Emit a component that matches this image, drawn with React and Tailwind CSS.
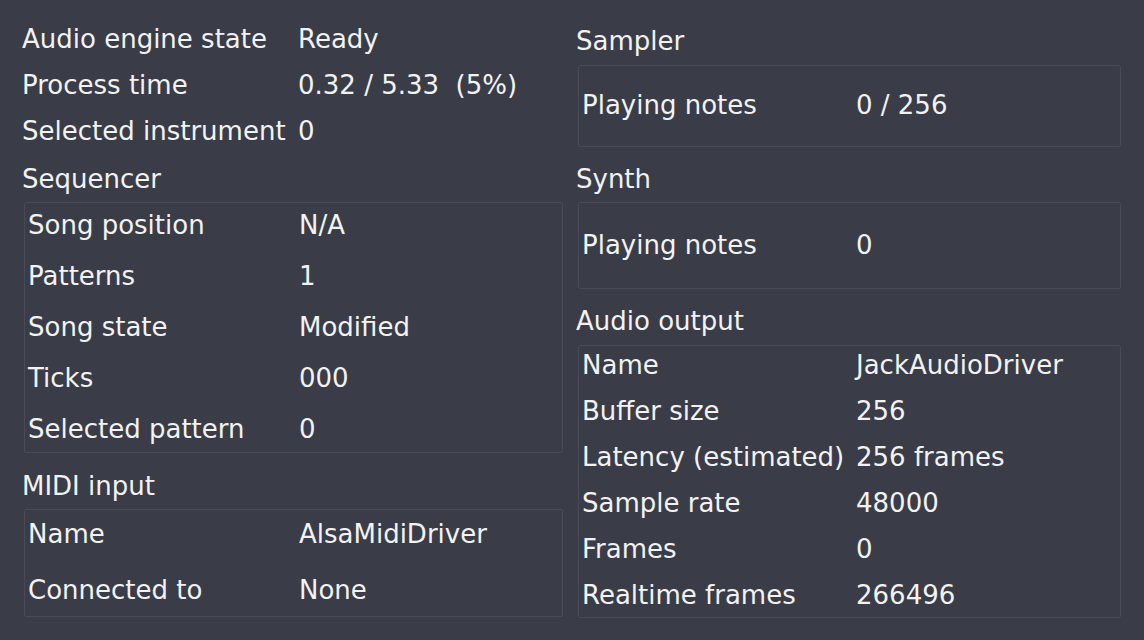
import React from "react";

const Row = ({ label, value, labelW }) => (
  <div className="flex h-[30px] leading-[30px] whitespace-pre">
    <div style={{ width: labelW }} className="shrink-0">{label}</div>
    <div>{value}</div>
  </div>
);

export default function App() {
  return (
    <div
      className="w-[1144px] h-[640px] bg-[#3a3d48] text-[#f2f2f2] text-[26px] overflow-hidden flex pl-[22px] pr-[23px]"
      style={{ fontFamily: '"DejaVu Sans", sans-serif' }}
    >
      {/* Left column */}
      <div className="w-[541px] shrink-0 flex flex-col">
        <div className="pt-[24px] flex flex-col gap-[16px]">
          <Row label="Audio engine state" value="Ready" labelW={276} />
          <Row label="Process time" value="0.32 / 5.33  (5%)" labelW={276} />
          <Row label="Selected instrument" value="0" labelW={276} />
        </div>
        <div className="mt-[18px] h-[30px] leading-[30px]">Sequencer</div>
        <div className="mt-[8px] ml-[2px] border border-[#484b57] rounded-[2px] pl-[3px] pt-[7px] pb-[8px] flex flex-col gap-[21px]">
          <Row label="Song position" value="N/A" labelW={271} />
          <Row label="Patterns" value="1" labelW={271} />
          <Row label="Song state" value="Modified" labelW={271} />
          <Row label="Ticks" value="000" labelW={271} />
          <Row label="Selected pattern" value="0" labelW={271} />
        </div>
        <div className="mt-[18px] h-[30px] leading-[30px]">MIDI input</div>
        <div className="mt-[8px] ml-[2px] border border-[#484b57] rounded-[2px] pl-[3px] pt-[9px] pb-[11px] flex flex-col gap-[26px]">
          <Row label="Name" value="AlsaMidiDriver" labelW={271} />
          <Row label="Connected to" value="None" labelW={271} />
        </div>
      </div>

      {/* Right column */}
      <div className="ml-[13px] flex-1 flex flex-col">
        <div className="pt-[26px] h-[56px] leading-[30px]">Sampler</div>
        <div className="mt-[9px] ml-[2px] border border-[#484b57] rounded-[2px] pl-[3px] pt-[24px] pb-[26px]">
          <Row label="Playing notes" value="0 / 256" labelW={274} />
        </div>
        <div className="mt-[17px] h-[30px] leading-[30px]">Synth</div>
        <div className="mt-[8px] ml-[2px] border border-[#484b57] rounded-[2px] pl-[3px] pt-[27px] pb-[28px]">
          <Row label="Playing notes" value="0" labelW={274} />
        </div>
        <div className="mt-[17px] h-[30px] leading-[30px]">Audio output</div>
        <div className="mt-[9px] ml-[2px] border border-[#484b57] rounded-[2px] pl-[3px] pt-[4px] pb-[7px] flex flex-col gap-[16px]">
          <Row label="Name" value="JackAudioDriver" labelW={274} />
          <Row label="Buffer size" value="256" labelW={274} />
          <Row label="Latency (estimated)" value="256 frames" labelW={274} />
          <Row label="Sample rate" value="48000" labelW={274} />
          <Row label="Frames" value="0" labelW={274} />
          <Row label="Realtime frames" value="266496" labelW={274} />
        </div>
      </div>
    </div>
  );
}
